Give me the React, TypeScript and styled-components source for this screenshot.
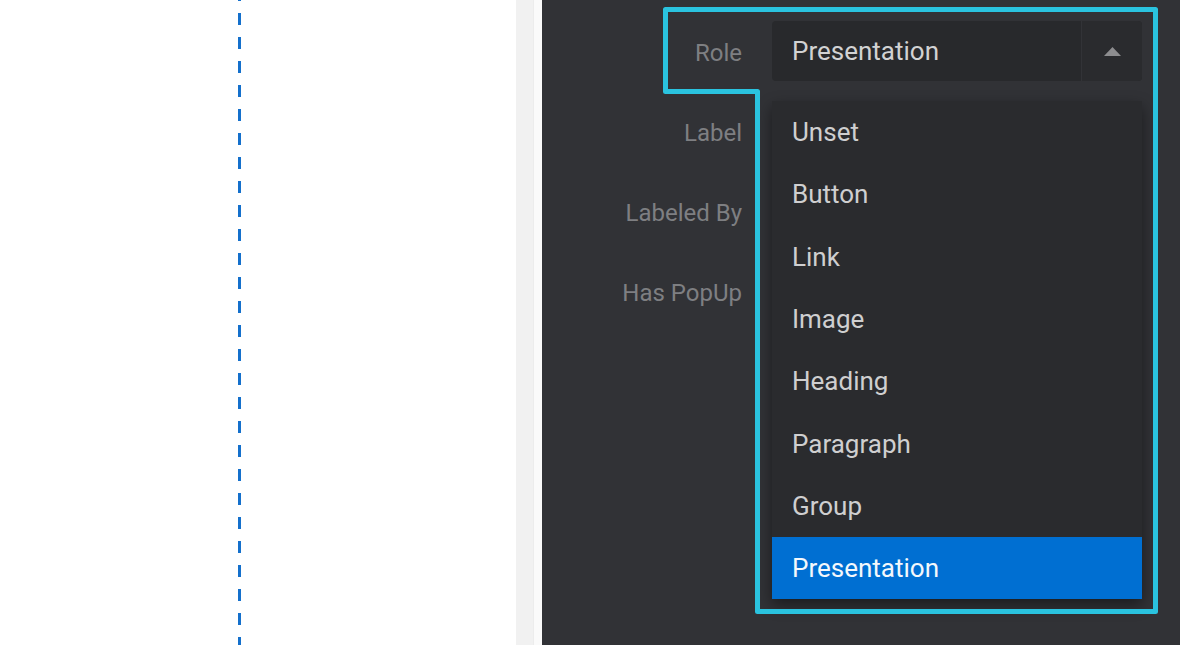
import React from "react";
import styled, { createGlobalStyle } from "styled-components";

const Global = createGlobalStyle`
  html, body { margin: 0; padding: 0; background: #ffffff; }
  body { font-family: Roboto, "Liberation Sans", sans-serif; overflow: hidden; }
  * { box-sizing: border-box; }
`;

const Page = styled.div`
  display: flex;
  width: 1180px;
  height: 645px;
  overflow: hidden;
`;

const Canvas = styled.div`
  width: 516px;
  height: 100%;
  background: #ffffff;
  display: flex;
  padding-left: 238px;
`;

const DashedGuide = styled.div`
  width: 3px;
  height: 100%;
  background-image: linear-gradient(to bottom, #1470cc 0, #1470cc 12px, transparent 12px, transparent 24px);
  background-size: 3px 24px;
  background-position: 0 13px;
  background-repeat: repeat-y;
`;

const Gutter = styled.div`
  width: 18px;
  height: 100%;
  background: #f1f1f1;
  border-right: 1px solid #ececec;
`;

const Gap = styled.div`
  width: 8px;
  height: 100%;
  background: #fafafa;
`;

const Panel = styled.div`
  position: relative;
  flex: 1;
  height: 100%;
  background: #313236;
  padding-top: 21px;
`;

const Form = styled.div`
  display: grid;
  grid-template-columns: 200px 370px;
  grid-auto-rows: 60px;
  column-gap: 30px;
  row-gap: 20px;
`;

const FieldLabel = styled.div`
  display: flex;
  align-items: center;
  justify-content: flex-end;
  padding-top: 3px;
  font-size: 24px;
  color: #7e7f82;
  white-space: nowrap;
`;

const SelectWrap = styled.div`
  position: relative;
  z-index: 2;
`;

const SelectBox = styled.div`
  display: flex;
  height: 60px;
  background: #28292c;
  border-radius: 4px;
  overflow: hidden;
`;

const SelectValue = styled.div`
  flex: 1;
  display: flex;
  align-items: center;
  padding-left: 20px;
  font-size: 26px;
  color: #d2d2d3;
`;

const ArrowCell = styled.div`
  width: 61px;
  display: flex;
  align-items: center;
  justify-content: center;
  border-left: 1px solid #323337;
  background: #2a2b2e;
`;

const Menu = styled.div`
  position: absolute;
  left: 0;
  top: 80px;
  width: 370px;
  background: #2a2b2e;
  box-shadow: 0 6px 14px rgba(0, 0, 0, 0.45);
  display: flex;
  flex-direction: column;
`;

const Option = styled.div<{ $selected?: boolean }>`
  height: 62.3px;
  display: flex;
  align-items: center;
  padding-left: 20px;
  font-size: 26px;
  color: ${(p) => (p.$selected ? "#f4f8fc" : "#cfcfd0")};
  background: ${(p) => (p.$selected ? "#006fd2" : "transparent")};
`;

const Highlight = styled.svg`
  position: absolute;
  left: 0;
  top: 0;
  width: 638px;
  height: 645px;
  pointer-events: none;
  z-index: 3;
`;

const options = ["Unset", "Button", "Link", "Image", "Heading", "Paragraph", "Group", "Presentation"];

export default function App() {
  return (
    <>
      <Global />
      <Page>
        <Canvas>
          <DashedGuide />
        </Canvas>
        <Gutter />
        <Gap />
        <Panel>
          <Form>
            <FieldLabel>Role</FieldLabel>
            <SelectWrap>
              <SelectBox>
                <SelectValue>Presentation</SelectValue>
                <ArrowCell>
                  <svg width="17" height="9" viewBox="0 0 17 9">
                    <path d="M8.5 0 L17 9 L0 9 Z" fill="#8d8d8f" />
                  </svg>
                </ArrowCell>
              </SelectBox>
              <Menu>
                {options.map((o) => (
                  <Option key={o} $selected={o === "Presentation"}>
                    {o}
                  </Option>
                ))}
              </Menu>
            </SelectWrap>
            <FieldLabel>Label</FieldLabel>
            <div />
            <FieldLabel>Labeled By</FieldLabel>
            <div />
            <FieldLabel>Has PopUp</FieldLabel>
            <div />
          </Form>
          <Highlight viewBox="0 0 638 645">
            <path
              d="M123.5 9.5 L613.5 9.5 L613.5 611.5 L215.5 611.5 L215.5 91.5 L123.5 91.5 Z"
              fill="none"
              stroke="#2ac3df"
              strokeWidth="5"
              strokeLinejoin="round"
            />
          </Highlight>
        </Panel>
      </Page>
    </>
  );
}
